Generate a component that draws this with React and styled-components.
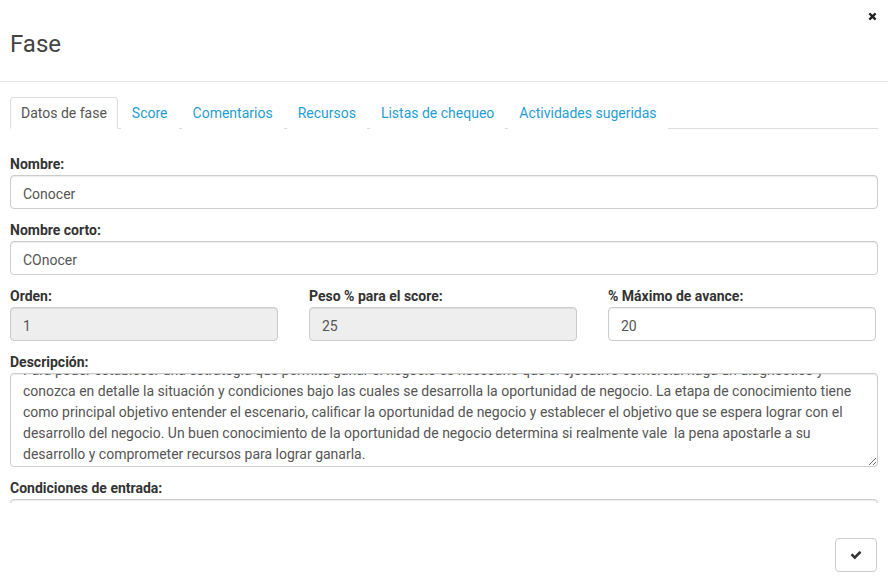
import React, { useEffect, useRef } from 'react'
import styled, { createGlobalStyle } from 'styled-components'

const GlobalStyle = createGlobalStyle`
  * { box-sizing: border-box; }
  html, body { margin: 0; padding: 0; background: #fff; }
  body {
    font-family: Roboto, "Liberation Sans", Arial, sans-serif;
    font-size: 14px;
    color: #333;
  }
`

const description = [
  'Para poder establecer una estrategia que permita ganar el negocio es necesario que el ejecutivo comercial haga un diagnóstico y',
  'conozca en detalle la situación y condiciones bajo las cuales se desarrolla la oportunidad de negocio. La etapa de conocimiento tiene',
  'como principal objetivo entender el escenario, calificar la oportunidad de negocio y establecer el objetivo que se espera lograr con el',
  'desarrollo del negocio. Un buen conocimiento de la oportunidad de negocio determina si realmente vale  la pena apostarle a su',
  'desarrollo y comprometer recursos para lograr ganarla.',
].join('\n')

const tabs = [
  'Datos de fase',
  'Score',
  'Comentarios',
  'Recursos',
  'Listas de chequeo',
  'Actividades sugeridas',
]

const CloseIcon = () => (
  <svg width="9" height="9" viewBox="0 0 1408 1408">
    <path
      fill="#222"
      d="M1298 1066q0 40-28 68l-136 136q-28 28-68 28t-68-28l-294-294-294 294q-28 28-68 28t-68-28l-136-136q-28-28-28-68t28-68l294-294-294-294q-28-28-28-68t28-68l136-136q28-28 68-28t68 28l294 294 294-294q28-28 68-28t68 28l136 136q28 28 28 68t-28 68l-294 294 294 294q28 28 28 68z"
    />
  </svg>
)

const CheckIcon = () => (
  <svg width="12" height="10" viewBox="0 256 1792 1300">
    <path
      fill="#333"
      d="M1671 566q0 40-28 68l-724 724-136 136q-28 28-68 28t-68-28l-136-136-362-362q-28-28-28-68t28-68l136-136q28-28 68-28t68 28l294 295 656-657q28-28 68-28t68 28l136 136q28 28 28 68z"
    />
  </svg>
)

const App = () => {
  const areaRef = useRef(null)

  useEffect(() => {
    if (areaRef.current) areaRef.current.scrollTop = 20
  }, [])

  return (
    <Modal>
      <GlobalStyle />
      <Header>
        <Title>Fase</Title>
        <Close type="button">
          <CloseIcon />
        </Close>
      </Header>
      <Body>
        <Tabs>
          {tabs.map((t, i) => (
            <Tab key={t} active={i === 0}>
              {t}
            </Tab>
          ))}
        </Tabs>
        <TabContent>
          <Group>
            <Label>Nombre:</Label>
            <Input defaultValue="Conocer" />
          </Group>
          <Group>
            <Label>Nombre corto:</Label>
            <Input defaultValue="COnocer" />
          </Group>
          <Row>
            <Group>
              <Label>Orden:</Label>
              <Input defaultValue="1" disabled />
            </Group>
            <Group>
              <Label>Peso % para el score:</Label>
              <Input defaultValue="25" disabled />
            </Group>
            <Group>
              <Label>% Máximo de avance:</Label>
              <Input defaultValue="20" />
            </Group>
          </Row>
          <Group>
            <Label>Descripción:</Label>
            <TextArea ref={areaRef} wrap="off" defaultValue={description} />
          </Group>
          <Group>
            <Label>Condiciones de entrada:</Label>
            <Input defaultValue="" />
          </Group>
        </TabContent>
      </Body>
      <Footer>
        <SaveButton type="button">
          <CheckIcon />
        </SaveButton>
      </Footer>
    </Modal>
  )
}

export default App

const Modal = styled.div`
  width: 888px;
  height: 583px;
  background: #fff;
  display: flex;
  flex-direction: column;
  overflow: hidden;
`

const Header = styled.div`
  position: relative;
  height: 82px;
  flex-shrink: 0;
  border-bottom: 1px solid #e5e5e5;
  display: flex;
  align-items: center;
  padding: 7px 10px 0;
`

const Title = styled.h4`
  margin: 0;
  font-size: 24px;
  font-weight: 400;
  line-height: 1.1;
  color: #444;
`

const Close = styled.button`
  position: absolute;
  top: 10px;
  right: 10px;
  width: 12px;
  height: 12px;
  padding: 0;
  border: 0;
  background: transparent;
  display: flex;
  align-items: center;
  justify-content: center;
  cursor: pointer;
`

const Body = styled.div`
  height: 421px;
  flex-shrink: 0;
  overflow: hidden;
  padding: 15px 10px 0;
`

const Tabs = styled.ul`
  list-style: none;
  margin: 0;
  padding: 0;
  display: flex;
  border-bottom: 1px solid #ddd;
`

const Tab = styled.li`
  margin-right: 3px;
  margin-bottom: -1px;
  padding: 5px 10px;
  line-height: 20px;
  font-size: 14px;
  border: 1px solid ${(p) => (p.active ? '#ddd' : 'transparent')};
  border-bottom-color: ${(p) => (p.active ? '#fff' : 'transparent')};
  border-radius: 4px 4px 0 0;
  background: #fff;
  color: ${(p) => (p.active ? '#555' : '#1f9dd4')};
  cursor: pointer;
`

const TabContent = styled.div`
  padding-top: 26px;
`

const Group = styled.div`
  margin-bottom: 12px;
  display: flex;
  flex-direction: column;
  min-width: 0;
`

const Row = styled.div`
  display: grid;
  grid-template-columns: 268px 268px 268px;
  column-gap: 31px;
`

const Label = styled.label`
  font-weight: 700;
  font-size: 14px;
  line-height: 19px;
  margin-bottom: 1px;
  color: #333;
`

const Input = styled.input`
  height: 34px;
  width: 100%;
  padding: 8px 12px 4px;
  font-family: inherit;
  font-size: 14px;
  line-height: 20px;
  color: #555;
  background: ${(p) => (p.disabled ? '#eee' : '#fff')};
  border: 1px solid #ccc;
  border-radius: 4px;
  box-shadow: inset 0 1px 1px rgba(0, 0, 0, 0.075);
  outline: none;
`

const TextArea = styled.textarea`
  height: 94px;
  width: 100%;
  padding: 6px 12px;
  font-family: inherit;
  font-size: 14px;
  line-height: 21px;
  color: #555;
  background: #fff;
  border: 1px solid #ccc;
  border-radius: 4px;
  box-shadow: inset 0 1px 1px rgba(0, 0, 0, 0.075);
  overflow: hidden;
  white-space: pre;
  outline: none;
`

const Footer = styled.div`
  flex: 1;
  display: flex;
  justify-content: flex-end;
  align-items: flex-start;
  padding: 35px 11px 0;
`

const SaveButton = styled.button`
  width: 42px;
  height: 34px;
  border: 1px solid #ccc;
  border-radius: 4px;
  background: #fff;
  display: flex;
  align-items: center;
  justify-content: center;
  cursor: pointer;
`
